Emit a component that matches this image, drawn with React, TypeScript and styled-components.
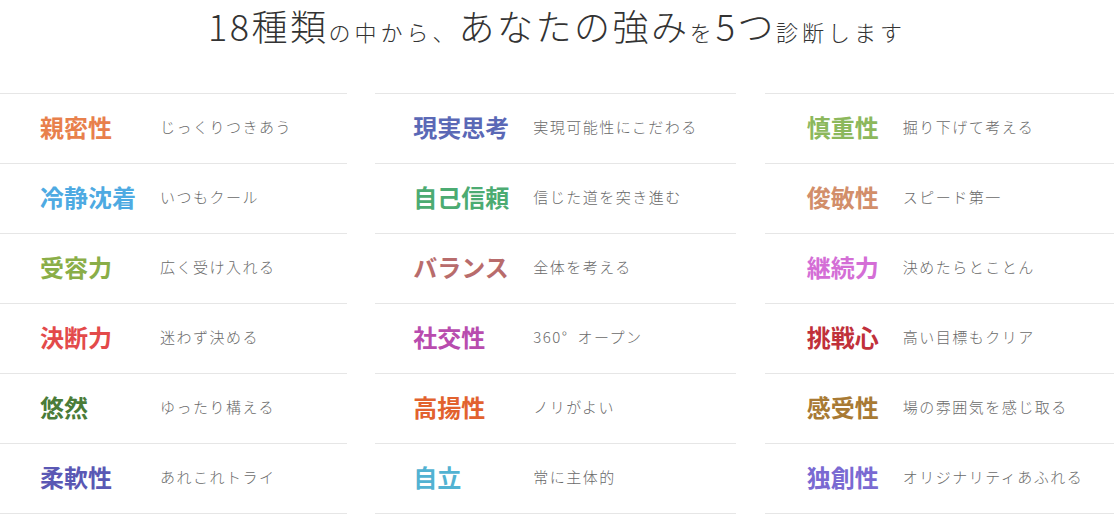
import styled, { createGlobalStyle } from "styled-components";

const GlobalStyle = createGlobalStyle`
  html, body {
    margin: 0;
    padding: 0;
    background: #fff;
    overflow: hidden;
  }
  body {
    font-family: "Noto Sans CJK JP", "Noto Sans", sans-serif;
  }
`;

const Page = styled.div`
  width: 1114px;
  height: 520px;
`;

const Title = styled.h1`
  margin: 0;
  height: 93px;
  box-sizing: border-box;
  padding-top: 2px;
  text-align: center;
  font-weight: 300;
  font-size: 36px;
  line-height: 46px;
  letter-spacing: 2.5px;
  color: #333;
  white-space: nowrap;
`;

const Small = styled.span`
  font-size: 22px;
  letter-spacing: 4px;
`;

const Columns = styled.main`
  display: flex;
  justify-content: center;
  gap: 28.5px;
  padding-right: 3px;
`;

const Column = styled.ul`
  flex: 0 0 361px;
  display: grid;
  grid-template-columns: 1fr auto auto 1fr;
  margin: 0;
  padding: 0;
  list-style: none;
  border-bottom: 1px solid #e6e6e6;
`;

const Row = styled.li`
  grid-column: 1 / -1;
  display: grid;
  grid-template-columns: subgrid;
  align-items: center;
  height: 70px;
  box-sizing: border-box;
  padding-bottom: 4px;
  border-top: 1px solid #e6e6e6;
`;

const Name = styled.span<{ $color: string }>`
  grid-column: 2;
  padding-right: 24px;
  font-size: 24px;
  font-weight: 700;
  color: ${(p) => p.$color};
`;

const Desc = styled.span`
  grid-column: 3;
  font-size: 15px;
  font-weight: 300;
  letter-spacing: 1.5px;
  color: #6a6a6a;
  white-space: nowrap;
`;

type Strength = { name: string; desc: string; color: string };

const columns: Strength[][] = [
  [
    { name: "親密性", desc: "じっくりつきあう", color: "#e8804c" },
    { name: "冷静沈着", desc: "いつもクール", color: "#4eaae2" },
    { name: "受容力", desc: "広く受け入れる", color: "#8aae48" },
    { name: "決断力", desc: "迷わず決める", color: "#e34a4a" },
    { name: "悠然", desc: "ゆったり構える", color: "#4a7c38" },
    { name: "柔軟性", desc: "あれこれトライ", color: "#5a58b4" },
  ],
  [
    { name: "現実思考", desc: "実現可能性にこだわる", color: "#5a68b6" },
    { name: "自己信頼", desc: "信じた道を突き進む", color: "#4cab72" },
    { name: "バランス", desc: "全体を考える", color: "#b86c6c" },
    { name: "社交性", desc: "360°\u2002オープン", color: "#b84cae" },
    { name: "高揚性", desc: "ノリがよい", color: "#e2622e" },
    { name: "自立", desc: "常に主体的", color: "#52b2d2" },
  ],
  [
    { name: "慎重性", desc: "掘り下げて考える", color: "#8cb85c" },
    { name: "俊敏性", desc: "スピード第一", color: "#d28e6a" },
    { name: "継続力", desc: "決めたらとことん", color: "#d46ed6" },
    { name: "挑戦心", desc: "高い目標もクリア", color: "#c0303a" },
    { name: "感受性", desc: "場の雰囲気を感じ取る", color: "#a87a34" },
    { name: "独創性", desc: "オリジナリティあふれる", color: "#7a6ad2" },
  ],
];

export default function App() {
  return (
    <Page>
      <GlobalStyle />
      <Title>
        18種類<Small>の中から、</Small>あなたの強み<Small>を</Small>5つ
        <Small>診断します</Small>
      </Title>
      <Columns>
        {columns.map((col, i) => (
          <Column key={i}>
            {col.map((s) => (
              <Row key={s.name}>
                <Name $color={s.color}>{s.name}</Name>
                <Desc>{s.desc}</Desc>
              </Row>
            ))}
          </Column>
        ))}
      </Columns>
    </Page>
  );
}
